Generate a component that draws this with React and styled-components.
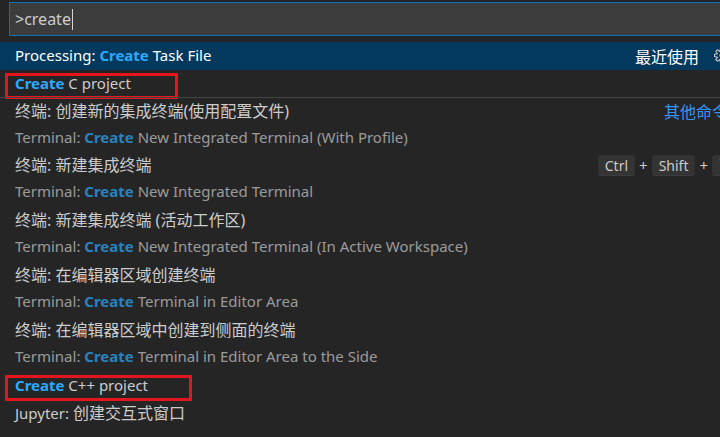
import styled, { createGlobalStyle } from 'styled-components'
import { VscGear } from 'react-icons/vsc'

const GlobalStyle = createGlobalStyle`
  html, body {
    margin: 0;
    padding: 0;
    background: #252526;
    overflow: hidden;
  }
  * { box-sizing: border-box; }
`

export default function App() {
  return (
    <>
      <GlobalStyle />
      <Viewport>
        <Panel>
          <InputBox>
            <span>&gt;create</span>
            <Caret />
          </InputBox>
          <List>
            {rows.map((row, i) => (
              <Row key={i} $double={!!row.detail} $focused={row.focused} $separator={!!row.separator}>
                {row.mark ? <Mark $width={row.mark} /> : null}
                <Lines>
                  <Label $double={!!row.detail} $focused={row.focused}>{row.label}</Label>
                  {row.detail ? <Detail>{row.detail}</Detail> : null}
                </Lines>
                <Side $double={!!row.detail}>
                  {row.recent ? (
                    <>
                      <Recent>最近使用</Recent>
                      <GearButton><VscGear size={17} /></GearButton>
                    </>
                  ) : null}
                  {row.separator ? <SeparatorLabel>{row.separator}</SeparatorLabel> : null}
                  {row.keys ? (
                    <Keys>
                      {row.keys.map((k, j) => (
                        <span key={k}>
                          {j > 0 ? <Plus>+</Plus> : null}
                          <Key>{k}</Key>
                        </span>
                      ))}
                    </Keys>
                  ) : null}
                </Side>
              </Row>
            ))}
          </List>
        </Panel>
      </Viewport>
    </>
  )
}

const Viewport = styled.div`
  width: 720px;
  height: 437px;
  overflow: hidden;
  background: #252526;
`

const Panel = styled.div`
  width: 742px;
  padding-top: 2px;
  font-family: "Noto Sans", "Noto Sans CJK SC", sans-serif;
  font-size: 15px;
  color: #cccccc;
`

const Zh = styled.span`
  font-size: 16px;
`

const InputBox = styled.div`
  margin-left: 9px;
  height: 34px;
  border: 1px solid #0e70b3;
  background: #3c3c3c;
  display: flex;
  align-items: center;
  padding-left: 5px;
  font-size: 16px;
  color: #cccccc;
`

const Caret = styled.span`
  display: inline-block;
  width: 1px;
  height: 21px;
  background: #d4d4d4;
  margin-left: 1px;
`

const List = styled.div`
  margin-top: 6px;
  display: flex;
  flex-direction: column;
`

const Row = styled.div`
  position: relative;
  height: ${p => (p.$double ? '55px' : '27.5px')};
  padding: 0 12px 0 15px;
  display: flex;
  align-items: flex-start;
  background: ${p => (p.$focused ? '#04395e' : 'transparent')};
  border-top: ${p => (p.$separator ? '1px solid #454545' : 'none')};
`

const Mark = styled.div`
  position: absolute;
  left: 5px;
  top: 3px;
  width: ${p => p.$width}px;
  height: 26px;
  border: 3px solid #e3151d;
  pointer-events: none;
`

const Lines = styled.div`
  flex: 1;
  display: flex;
  flex-direction: column;
  min-width: 0;
`

const Label = styled.div`
  height: ${p => (p.$double ? '26px' : '27.5px')};
  line-height: ${p => (p.$double ? '26px' : '27.5px')};
  white-space: nowrap;
  color: ${p => (p.$focused ? '#ffffff' : '#cccccc')};
`

const Detail = styled.div`
  height: 26px;
  line-height: 26px;
  white-space: nowrap;
  opacity: 0.7;
`

const Hl = styled.span`
  color: #2aaaff;
  font-weight: 700;
`

const Side = styled.div`
  display: flex;
  align-items: center;
  height: ${p => (p.$double ? '26px' : '27.5px')};
  flex-shrink: 0;
`

const Recent = styled.span`
  color: #ffffff;
  font-size: 16px;
`

const GearButton = styled.span`
  display: flex;
  align-items: center;
  margin-left: 14px;
  color: #cccccc;
`

const SeparatorLabel = styled.span`
  color: #3794ff;
  font-size: 16px;
  margin-right: 2px;
`

const Keys = styled.div`
  display: flex;
  align-items: center;
`

const Key = styled.span`
  display: inline-block;
  height: 21px;
  line-height: 20px;
  padding: 0 6px;
  font-size: 14px;
  color: #cccccc;
  background: rgba(128, 128, 128, 0.17);
  border: 1px solid rgba(51, 51, 51, 0.6);
  border-bottom-color: rgba(68, 68, 68, 0.6);
  border-radius: 3px;
`

const Plus = styled.span`
  margin: 0 4px;
  font-size: 15px;
`

const rows = [
  {
    focused: true,
    label: <>Processing: <Hl>Create</Hl> Task File</>,
    recent: true,
  },
  { label: <><Hl>Create</Hl> C project</>, mark: 173 },
  {
    separator: '其他命令',
    label: <Zh>终端: 创建新的集成终端(使用配置文件)</Zh>,
    detail: <>Terminal: <Hl>Create</Hl> New Integrated Terminal (With Profile)</>,
  },
  {
    label: <Zh>终端: 新建集成终端</Zh>,
    detail: <>Terminal: <Hl>Create</Hl> New Integrated Terminal</>,
    keys: ['Ctrl', 'Shift', '`'],
  },
  {
    label: <Zh>终端: 新建集成终端 (活动工作区)</Zh>,
    detail: <>Terminal: <Hl>Create</Hl> New Integrated Terminal (In Active Workspace)</>,
  },
  {
    label: <Zh>终端: 在编辑器区域创建终端</Zh>,
    detail: <>Terminal: <Hl>Create</Hl> Terminal in Editor Area</>,
  },
  {
    label: <Zh>终端: 在编辑器区域中创建到侧面的终端</Zh>,
    detail: <>Terminal: <Hl>Create</Hl> Terminal in Editor Area to the Side</>,
  },
  { label: <><Hl>Create</Hl> C++ project</>, mark: 187 },
  { label: <>Jupyter: <Zh>创建交互式窗口</Zh></> },
]
